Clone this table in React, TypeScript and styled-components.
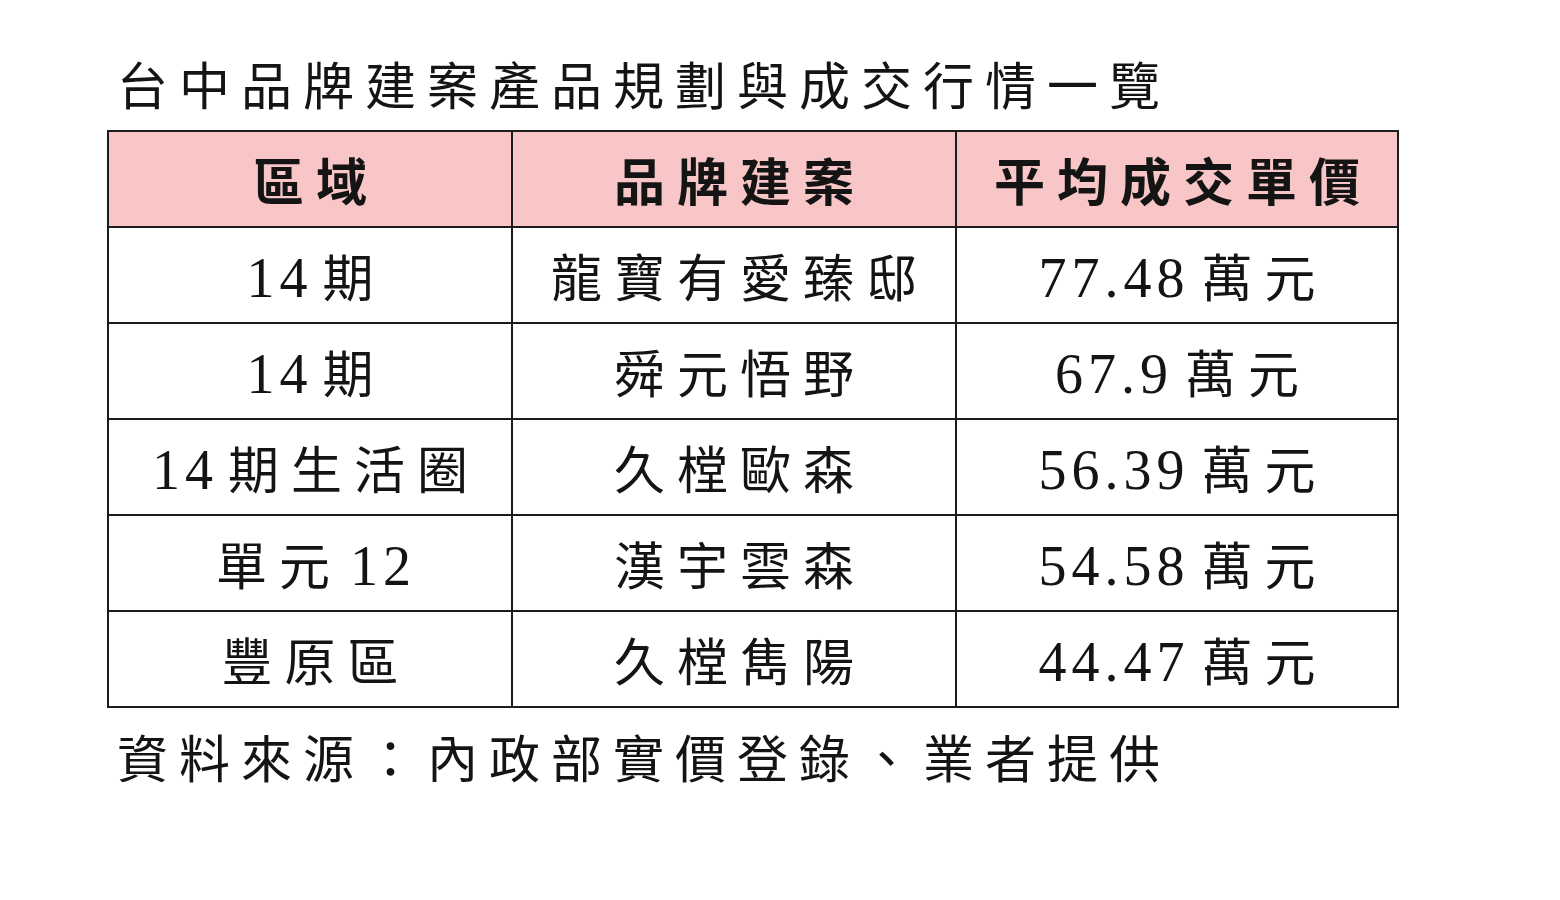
import styled, { createGlobalStyle } from "styled-components"

const GlobalStyle = createGlobalStyle`
  html, body {
    margin: 0;
    padding: 0;
    background: #fff;
  }
  body {
    font-family: "Noto Sans CJK TC", sans-serif;
    color: #141414;
  }
`

const Page = styled.div`
  width: 1560px;
  height: 900px;
  padding: 49px 0 0 107px;
  box-sizing: border-box;
  display: flex;
  flex-direction: column;
`

const Title = styled.h1`
  margin: 0 0 13px 10px;
  font-size: 51px;
  font-weight: 400;
  line-height: 68px;
  letter-spacing: 11px;
  white-space: nowrap;
`

const Table = styled.table`
  width: 1290px;
  border-collapse: collapse;
  table-layout: fixed;
  font-family: "Noto Sans CJK TC", sans-serif;
  color: #141414;
`

const HeadCell = styled.th`
  height: 94px;
  padding: 0;
  background: #f8c6c6;
  border: 2px solid #1c1c1c;
  font-size: 51px;
  font-weight: 700;
  letter-spacing: 12px;
  text-indent: 12px;
  text-align: center;
`

const Cell = styled.td`
  height: 94px;
  padding: 0;
  border: 2px solid #1c1c1c;
  font-size: 51px;
  font-weight: 400;
  letter-spacing: 12px;
  text-indent: 12px;
  text-align: center;
  white-space: nowrap;
`

const Num = styled.span<{ $gap?: number; $lead?: number }>`
  font-family: "Liberation Serif", "DejaVu Serif", serif;
  font-size: 56px;
  letter-spacing: 5px;
  margin-left: ${(p) => p.$lead ?? 0}px;
  margin-right: ${(p) => p.$gap ?? 0}px;
`

const Source = styled.p`
  margin: 14px 0 0 10px;
  font-size: 51px;
  line-height: 68px;
  letter-spacing: 11px;
  white-space: nowrap;
`

const rows = [
  { area: "期", areaNum: "14", project: "龍寶有愛臻邸", price: "77.48" },
  { area: "期", areaNum: "14", project: "舜元悟野", price: "67.9" },
  { area: "期生活圈", areaNum: "14", project: "久樘歐森", price: "56.39" },
  { area: "單元", areaTail: "12", project: "漢宇雲森", price: "54.58" },
  { area: "豐原區", project: "久樘雋陽", price: "44.47" },
]

function App() {
  return (
    <>
      <GlobalStyle />
      <Page>
        <Title>台中品牌建案產品規劃與成交行情一覽</Title>
        <Table>
          <colgroup>
            <col style={{ width: 404 }} />
            <col style={{ width: 444 }} />
            <col style={{ width: 442 }} />
          </colgroup>
          <thead>
            <tr>
              <HeadCell>區域</HeadCell>
              <HeadCell>品牌建案</HeadCell>
              <HeadCell>平均成交單價</HeadCell>
            </tr>
          </thead>
          <tbody>
            {rows.map((r, i) => (
              <tr key={i}>
                <Cell>
                  {r.areaNum && <Num $gap={10}>{r.areaNum}</Num>}
                  {r.area}
                  {r.areaTail && <Num $lead={8}>{r.areaTail}</Num>}
                </Cell>
                <Cell>{r.project}</Cell>
                <Cell>
                  <Num $gap={12}>{r.price}</Num>
                  萬元
                </Cell>
              </tr>
            ))}
          </tbody>
        </Table>
        <Source>資料來源：內政部實價登錄、業者提供</Source>
      </Page>
    </>
  )
}

export default App
